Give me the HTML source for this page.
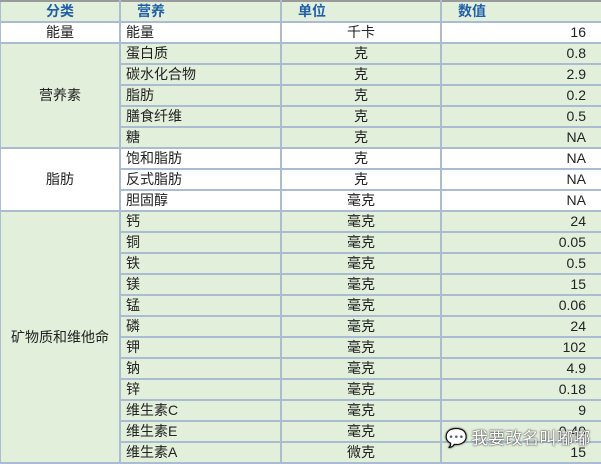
<!DOCTYPE html>
<html><head><meta charset="utf-8"><style>
html,body{margin:0;padding:0;width:601px;height:464px;overflow:hidden;background:#fff}
table{border-collapse:collapse;table-layout:fixed;width:602px;margin-left:-1px;margin-top:0;font-family:"Liberation Sans","Noto Sans CJK SC",sans-serif;font-size:14px;color:#222}
td{border:2px solid #a9bcd2;height:19px;padding:0 5px;line-height:19px;background:#e2efda;white-space:nowrap;overflow:hidden}
tr:first-child td{border-top:2px solid #9a9a9a;color:#1f5faa;font-weight:bold;padding-left:16px}
tr:first-child td.c{padding-left:5px}
td.c{text-align:center}td.r{text-align:right;padding-right:15px}
tr.w td{background:#fff}
.wm{position:absolute;left:445px;top:424px;font-family:"Noto Sans CJK SC",sans-serif;font-size:17px;color:#fff;text-shadow:0 0 2px #444,0 0 1px #222;white-space:nowrap}
</style></head><body>
<table>
<col style="width:120px"><col style="width:161px"><col style="width:160px"><col style="width:161px">
<tr><td class="c">分类</td><td>营养</td><td>单位</td><td>数值</td></tr>
<tr class="w"><td class="c">能量</td><td>能量</td><td class="c">千卡</td><td class="r">16</td></tr>
<tr><td class="c" rowspan="5">营养素</td><td>蛋白质</td><td class="c">克</td><td class="r">0.8</td></tr>
<tr><td>碳水化合物</td><td class="c">克</td><td class="r">2.9</td></tr>
<tr><td>脂肪</td><td class="c">克</td><td class="r">0.2</td></tr>
<tr><td>膳食纤维</td><td class="c">克</td><td class="r">0.5</td></tr>
<tr><td>糖</td><td class="c">克</td><td class="r">NA</td></tr>
<tr class="w"><td class="c" rowspan="3">脂肪</td><td>饱和脂肪</td><td class="c">克</td><td class="r">NA</td></tr>
<tr class="w"><td>反式脂肪</td><td class="c">克</td><td class="r">NA</td></tr>
<tr class="w"><td>胆固醇</td><td class="c">毫克</td><td class="r">NA</td></tr>
<tr><td class="c" rowspan="12">矿物质和维他命</td><td>钙</td><td class="c">毫克</td><td class="r">24</td></tr>
<tr><td>铜</td><td class="c">毫克</td><td class="r">0.05</td></tr>
<tr><td>铁</td><td class="c">毫克</td><td class="r">0.5</td></tr>
<tr><td>镁</td><td class="c">毫克</td><td class="r">15</td></tr>
<tr><td>锰</td><td class="c">毫克</td><td class="r">0.06</td></tr>
<tr><td>磷</td><td class="c">毫克</td><td class="r">24</td></tr>
<tr><td>钾</td><td class="c">毫克</td><td class="r">102</td></tr>
<tr><td>钠</td><td class="c">毫克</td><td class="r">4.9</td></tr>
<tr><td>锌</td><td class="c">毫克</td><td class="r">0.18</td></tr>
<tr><td>维生素C</td><td class="c">毫克</td><td class="r">9</td></tr>
<tr><td>维生素E</td><td class="c">毫克</td><td class="r">0.49</td></tr>
<tr><td>维生素A</td><td class="c">微克</td><td class="r">15</td></tr>
</table>
<div class="wm"><span style="font-size:18px">💬</span> 我要改名叫嘟嘟</div>
</body></html>
